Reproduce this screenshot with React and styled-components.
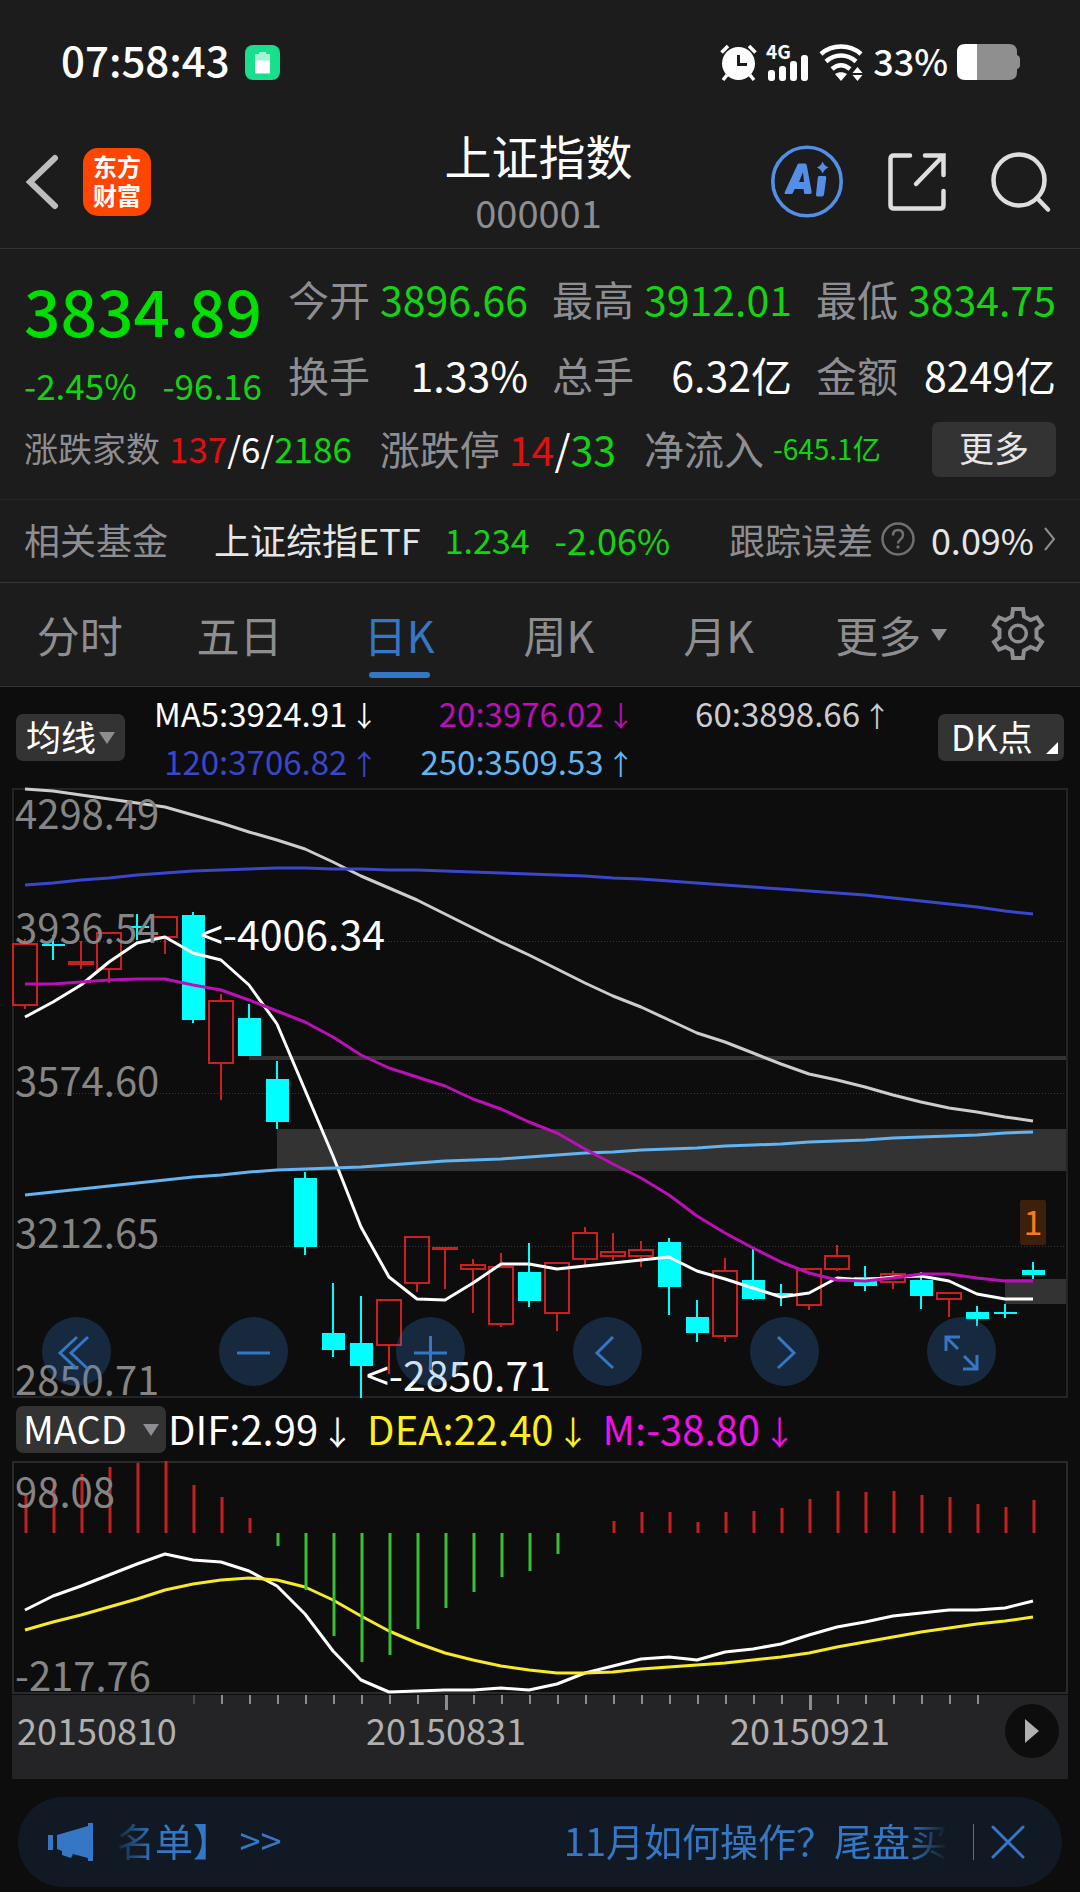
import React from "react";
import styled, { createGlobalStyle } from "styled-components";

const GlobalStyle = createGlobalStyle`
  * {
    box-sizing: border-box;
  }
  body {
    margin: 0;
    background: #0d0d0d;
    color: #fff;
    font-family: "Noto Sans CJK SC", sans-serif;
  }
  button {
    margin: 0;
    padding: 0;
    border: none;
    background: none;
    color: inherit;
    font: inherit;
    cursor: pointer;
  }
  a {
    color: inherit;
    text-decoration: none;
  }
  svg {
    display: block;
    overflow: visible;
  }
`;

const colors = {
  up: "#e01010",
  down: "#14d214",
  label: "#8e8e92",
  text: "#fff",
  soft: "#e6e6e6",
  blue: "#3577c4",
};

const Top = styled.div`
  background: #1c1c1c;
`;

const StatusBar = styled.div`
  display: flex;
  align-items: center;
  justify-content: space-between;
  height: 115px;
  padding: 9px 60px 0 61px;
`;

const StatusGroup = styled.div`
  display: flex;
  align-items: center;
  gap: ${(props) => props.$gap}px;
`;

const Clock = styled.span`
  font-size: 42px;
  font-weight: 500;
  line-height: 44px;
  padding-bottom: 6px;
`;

const Percent = styled.span`
  font-size: 36px;
  font-weight: 500;
  line-height: 40px;
  padding-bottom: 4px;
`;

const Header = styled.header`
  display: grid;
  grid-template-columns: 1fr auto 1fr;
  align-items: center;
  height: 134px;
  padding: 0 29px 0 26px;
  border-bottom: 1px solid #333;
`;

const HeaderSide = styled.div`
  display: flex;
  align-items: center;
  justify-content: ${(props) => (props.$end ? "flex-end" : "flex-start")};
  gap: ${(props) => (props.$end ? 45 : 23)}px;
`;

const Logo = styled.a`
  display: flex;
  flex-direction: column;
  align-items: center;
  justify-content: center;
  width: 68px;
  height: 68px;
  padding-bottom: 4px;
  border-radius: 15px;
  background: #ff4600;
  font-size: 24px;
  font-weight: 700;
  line-height: 29px;
`;

const Title = styled.h1`
  margin: 0;
  padding-top: 2px;
  font-size: 47px;
  font-weight: 400;
  line-height: 58px;
  text-align: center;
`;

const Code = styled.div`
  color: ${colors.label};
  font-size: 38px;
  line-height: 56px;
  text-align: center;
`;

const Quote = styled.section`
  padding: 11px 24px 13px;
  border-bottom: 1px solid #282828;
`;

const QuoteMain = styled.div`
  display: flex;
`;

const PriceBox = styled.div`
  width: 264px;
  color: ${colors.down};
`;

const Price = styled.div`
  color: #00e000;
  font-size: 64px;
  font-weight: 500;
  line-height: 98px;
`;

const Change = styled.div`
  display: flex;
  gap: 26px;
  font-size: 35px;
  line-height: 54px;
`;

const Stats = styled.div`
  flex: 1;
  display: grid;
  grid-template-columns: repeat(3, 1fr);
  column-gap: 24px;
  font-size: 41px;
  line-height: 76px;
`;

const Stat = styled.div`
  display: flex;
  justify-content: space-between;
  white-space: nowrap;
`;

const Tint = styled.span`
  color: ${(props) => colors[props.$tone]};
`;

const QuoteRow = styled.div`
  display: flex;
  align-items: center;
  gap: 28px;
  height: 74px;
  white-space: nowrap;
`;

const Pair = styled.div`
  display: flex;
  align-items: center;
  gap: 9px;
  padding-bottom: 3px;
  font-size: ${(props) => props.$size}px;
`;

const Count = styled.span`
  font-size: ${(props) => props.$size}px;
`;

const MoreButton = styled.button`
  width: 124px;
  height: 55px;
  margin-left: auto;
  padding-bottom: 4px;
  border-radius: 7px;
  background: #333;
  color: ${colors.soft};
  font-size: 35px;
  line-height: 50px;
`;

const FundRow = styled.a`
  display: flex;
  align-items: center;
  height: 83px;
  padding: 0 24px 4px;
  border-bottom: 1px solid #333;
  color: ${colors.soft};
  font-size: 36px;
  white-space: nowrap;
`;

const FundName = styled.span`
  margin: 0 24px 0 46px;
`;

const FundPrice = styled.span`
  margin-right: 25px;
  color: ${colors.down};
  font-size: 34px;
`;

const FundError = styled.span`
  display: flex;
  align-items: center;
  gap: 8px;
  margin-left: auto;
`;

const FundErrorValue = styled.span`
  margin: 0 2px 0 8px;
`;

const Tabs = styled.nav`
  display: grid;
  grid-template-columns: repeat(6, 4fr) 3fr;
  height: 104px;
  padding-right: 2px;
  border-bottom: 1px solid #333;
`;

const Tab = styled.button`
  position: relative;
  display: flex;
  align-items: center;
  justify-content: center;
  padding-bottom: 2px;
  color: ${(props) => (props.$active ? colors.blue : colors.label)};
  font-size: 43px;
  line-height: 60px;

  &::after {
    content: "";
    display: ${(props) => (props.$active ? "block" : "none")};
    position: absolute;
    bottom: 8px;
    width: 61px;
    height: 6px;
    border-radius: 3px;
    background: ${colors.blue};
  }
`;

const Caret = styled.span`
  width: 0;
  height: 0;
  margin-top: 4px;
  border-left: 8px solid transparent;
  border-right: 8px solid transparent;
  border-top: 12px solid ${colors.label};
`;

const TabCaret = styled(Caret)`
  margin: 2px -26px 0 10px;
`;

const Charts = styled.main`
  padding: 0 12px 5px;
`;

const Legend = styled.div`
  display: flex;
  align-items: center;
  height: 101px;
  padding: 0 4px;
`;

const Chip = styled.button`
  position: relative;
  display: flex;
  align-items: center;
  height: 47px;
  padding: 0 ${(props) => props.$pad}px 4px;
  gap: ${(props) => props.$gap || 0}px;
  border-radius: 7px;
  background: #333;
  font-size: ${(props) => props.$size || 35}px;
  line-height: 43px;
  white-space: nowrap;
`;

const DkChip = styled(Chip)`
  width: 126px;

  &::after {
    content: "";
    position: absolute;
    right: 6px;
    bottom: 7px;
    border-left: 12px solid transparent;
    border-bottom: 12px solid #fff;
  }
`;

const MaGrid = styled.div`
  flex: 1;
  display: grid;
  grid-template-columns: repeat(3, 1fr);
  margin-right: 44px;
  padding-bottom: 2px;
  font-size: 33px;
  line-height: 48px;
  text-align: right;
  white-space: nowrap;
`;

const MaItem = styled.span`
  color: ${(props) => props.$color};
`;

const Arrow = styled.span`
  padding: 0 3px;
  font-size: ${(props) => props.$size}px;
  line-height: 1;
`;

const Panel = styled.div`
  position: relative;
`;

const ChartSvg = styled.svg`
  width: 100%;
  height: auto;
  font-size: 40px;
`;

const AxisSvg = styled(ChartSvg)`
  margin-top: 1px;
  background: #242426;
  font-size: 36px;
`;

const Controls = styled.div`
  position: absolute;
  left: 30px;
  right: 72px;
  bottom: 12px;
  display: flex;
  justify-content: space-between;
`;

const RoundButton = styled.button`
  width: 69px;
  height: 69px;
  border-radius: 50%;
  background: rgba(57, 129, 217, 0.25);
`;

const MacdRow = styled.div`
  display: flex;
  align-items: center;
  height: 63px;
  padding: 0 4px;
`;

const MacdValues = styled.div`
  display: flex;
  gap: 10px;
  margin-left: 2px;
  padding-bottom: 3px;
  font-size: 40px;
  line-height: 50px;
  white-space: nowrap;
`;

const PlayButton = styled.button`
  position: absolute;
  right: 9px;
  top: 9px;
  display: flex;
  align-items: center;
  justify-content: center;
  width: 54px;
  height: 54px;
  border-radius: 50%;
  background: #0d0d0d;
`;

const Notice = styled.div`
  display: flex;
  align-items: center;
  height: 90px;
  margin: 18px 6px 0;
  padding: 0 37px 0 28px;
  border-radius: 45px;
  background: #111a24;
  color: ${colors.blue};
`;

const Ticker = styled.a`
  flex: 1;
  display: flex;
  justify-content: space-between;
  margin: 0 25px 0 16px;
  padding: 0 0 5px 7px;
  overflow: hidden;
  font-size: 38px;
  line-height: 56px;
  white-space: pre;
  mask-image: linear-gradient(
    to right,
    transparent,
    #000 44px,
    #000 calc(100% - 40px),
    transparent
  );
`;

const CloseButton = styled.button`
  display: flex;
  align-items: center;
  height: 36px;
  padding-left: 17px;
  border-left: 1px solid ${colors.blue};
`;

// one entry per trading day: [up, bodyTop, bodyBottom, high, low]
const candles = [
  [1, 156, 217, 151, 221],
  [0, 156, 158, 147, 172],
  [1, 174, 176, 153, 181],
  [1, 145, 181, 145, 195],
  [0, 138, 140, 126, 152],
  [1, 129, 149, 129, 166],
  [0, 127, 232, 124, 235],
  [1, 213, 275, 206, 312],
  [0, 230, 268, 216, 268],
  [0, 291, 334, 273, 341],
  [0, 390, 459, 384, 467],
  [0, 545, 562, 495, 569],
  [0, 555, 578, 508, 610],
  [1, 512, 557, 512, 586],
  [1, 449, 495, 449, 504],
  [1, 460, 461, 460, 501],
  [1, 477, 481, 471, 525],
  [1, 479, 536, 465, 539],
  [0, 484, 513, 455, 519],
  [1, 475, 525, 474, 543],
  [1, 445, 471, 439, 477],
  [1, 464, 468, 445, 472],
  [1, 462, 468, 453, 479],
  [0, 454, 499, 450, 527],
  [0, 529, 545, 512, 554],
  [1, 483, 548, 470, 554],
  [0, 492, 511, 461, 512],
  [0, 505, 507, 496, 518],
  [1, 481, 517, 481, 522],
  [1, 468, 481, 457, 483],
  [0, 489, 498, 478, 503],
  [1, 486, 494, 483, 501],
  [0, 492, 508, 484, 521],
  [1, 505, 511, 505, 529],
  [0, 524, 531, 518, 538],
  [0, 524, 526, 516, 530],
  [0, 482, 487, 474, 491],
];

const ma5 = [
  229, 214, 197, 174, 155, 149, 165, 172, 197, 236, 302, 368, 439, 489, 511,
  512, 495, 476, 476, 481, 478, 475, 472, 469, 483, 491, 500, 509, 505, 490,
  492, 489, 488, 493, 506, 511, 511,
];

const ma20 = [
  196, 196, 194, 192, 191, 191, 197, 202, 212, 223, 234, 249, 267, 280, 289,
  298, 311, 321, 334, 345, 361, 376, 390, 407, 428, 445, 460, 474, 485, 492,
  493, 490, 486, 486, 490, 493, 493,
];

const ma60 = [
  1, 3, 7, 11, 15, 19, 27, 35, 44, 52, 61, 74, 88, 100, 112, 126, 140, 154, 167,
  181, 195, 208, 219, 232, 245, 254, 265, 276, 286, 292, 299, 307, 314, 320,
  324, 329, 333,
];

const ma120 = [
  97, 95, 92, 90, 87, 85, 83, 82, 81, 80, 80, 81, 81, 82, 82, 83, 84, 85, 86,
  87, 88, 90, 91, 93, 95, 97, 99, 101, 103, 105, 107, 110, 113, 116, 119, 123,
  126,
];

const ma250 = [
  407, 404, 401, 398, 395, 392, 389, 387, 384, 382, 381, 380, 379, 377, 375,
  373, 372, 371, 369, 367, 365, 364, 362, 361, 360, 358, 357, 356, 354, 353,
  352, 350, 349, 348, 347, 345, 344,
];

const macdBars = [
  34, 18, 13, 6, 2, 0, 24, 36, 57, 85, 129, 175, 201, 194, 168, 147, 131, 116,
  110, 93, 72, 60, 51, 51, 61, 51, 50, 47, 38, 30, 31, 30, 34, 36, 43, 46, 39,
];

const dif = [
  149, 135, 125, 114, 103, 93, 99, 101, 110, 125, 153, 190, 219, 231, 230, 229,
  229, 227, 229, 223, 212, 205, 198, 196, 199, 191, 188, 183, 174, 166, 161,
  155, 152, 149, 149, 147, 140,
];

const dea = [
  169, 161, 154, 146, 138, 129, 123, 119, 117, 119, 126, 139, 155, 170, 182,
  192, 199, 205, 209, 212, 212, 211, 208, 206, 204, 202, 199, 196, 192, 186,
  181, 176, 171, 167, 163, 160, 156,
];

const STEP = 28;
const ZERO = 72;
const dayX = (i) => 13 + i * STEP;
const toPoints = (values) => values.map((y, i) => `${dayX(i)},${y}`).join(" ");

const stats = [
  { label: "今开", value: "3896.66", tone: "down" },
  { label: "最高", value: "3912.01", tone: "down" },
  { label: "最低", value: "3834.75", tone: "down" },
  { label: "换手", value: "1.33%", tone: "text" },
  { label: "总手", value: "6.32亿", tone: "text" },
  { label: "金额", value: "8249亿", tone: "text" },
];

const averages = [
  { text: "MA5:3924.91", arrow: "↓", color: "#fff" },
  { text: "20:3976.02", arrow: "↓", color: "#bb10b5" },
  { text: "60:3898.66", arrow: "↑", color: "#ccc" },
  { text: "120:3706.82", arrow: "↑", color: "#3a47cc" },
  { text: "250:3509.53", arrow: "↑", color: "#63b4f2" },
];

const macdValues = [
  { text: "DIF:2.99", arrow: "↓", color: "#fff" },
  { text: "DEA:22.40", arrow: "↓", color: "#fcee21" },
  { text: "M:-38.80", arrow: "↓", color: "#f010e8" },
];

const controls = [
  { name: "最早", d: "M35 20 18 36l17 16M46 20 29 36l17 16" },
  { name: "缩小", d: "M18 36h33" },
  { name: "放大", d: "M18 36h33M34.500 19v34" },
  { name: "左移", d: "M40 20 24 36l16 15" },
  { name: "右移", d: "M28 20 44 36 28 51" },
  {
    name: "全屏",
    d: "M19 34V20h14M19.500 20.500 31 32M50 38v14H36M49.500 51.500 37 39",
  },
];

function Line({ values, color, width = 3 }) {
  return (
    <polyline
      points={toPoints(values)}
      fill="none"
      stroke={color}
      strokeWidth={width}
      strokeLinejoin="round"
    />
  );
}

function Candle({ x, data }) {
  const [up, top, bottom, high, low] = data;
  if (up) {
    return (
      <g stroke="#cc2020" strokeWidth="2" fill="none">
        <rect x={x - 12} y={top} width="24" height={bottom - top} />
        <path d={`M${x} ${high}V${top}M${x} ${bottom}V${low}`} />
      </g>
    );
  }
  return (
    <g fill="#00ffff">
      <rect x={x - 11} y={top} width="23" height={bottom - top} />
      <rect x={x - 1} y={high} width="2" height={low - high} />
    </g>
  );
}

function Reading({ item, arrowSize }) {
  return (
    <MaItem $color={item.color}>
      {item.text}
      <Arrow $size={arrowSize}>{item.arrow}</Arrow>
    </MaItem>
  );
}

function StatusIcons() {
  return (
    <StatusGroup $gap={9}>
      <svg width="37" height="37" viewBox="0 0 37 37" fill="none">
        <circle cx="18.500" cy="19.500" r="16.500" fill="#fff" />
        <path
          d="M1.500 8.500 8 2M35.500 8.500 29 2M7 31l-4 5M30 31l4 5"
          stroke="#fff"
          strokeWidth="3.500"
        />
        <path d="M18.500 11v9.500H27" stroke="#1c1c1c" strokeWidth="3" />
      </svg>
      <svg width="44" height="37" viewBox="0 0 44 37" fill="#fff">
        <text x="0" y="15" fontSize="19" fontWeight="700">
          4G
        </text>
        <rect x="2" y="26" width="7" height="11" rx="3" />
        <rect x="13" y="22" width="7" height="15" rx="3" />
        <rect x="24" y="17" width="7" height="20" rx="3" />
        <rect x="35" y="11" width="7" height="26" rx="3" />
      </svg>
      <svg width="45" height="37" viewBox="0 0 45 37" fill="none">
        <path
          d="M2 10C13 0 31 0 42 10M7 17.500c9-8 21-8 30 0M13 25c6-5 12-5 18 0"
          stroke="#fff"
          strokeWidth="4.500"
        />
        <path
          d="M16 30c4-2.500 8-2.500 12 0l-6 7zM38.500 23l5 6h-10zM38.500 37l5-6h-10z"
          fill="#fff"
        />
      </svg>
      <Percent>33%</Percent>
      <svg width="63" height="36" viewBox="0 0 63 36">
        <path d="M20 0h32q8 0 8 8v3q3 1 3 4v6q0 3-3 4v3q0 8-8 8H20z" fill="#8f8f8f" />
        <path d="M8 0h12v36H8q-8 0-8-8V8q0-8 8-8z" fill="#fff" />
      </svg>
    </StatusGroup>
  );
}

function TopBar() {
  return (
    <>
      <StatusBar>
        <StatusGroup $gap={15}>
          <Clock>07:58:43</Clock>
          <svg width="35" height="35" viewBox="0 0 35 35">
            <rect width="35" height="35" rx="8" fill="#17df8b" />
            <path d="M10 9h4V7h7v2h4v7H10z" fill="#a6f3d3" />
            <rect x="10" y="15.500" width="15" height="13" rx="1" fill="#fff" />
          </svg>
        </StatusGroup>
        <StatusIcons />
      </StatusBar>
      <Header>
        <HeaderSide>
          <button aria-label="返回">
            <svg width="34" height="56" viewBox="0 0 34 56" fill="none">
              <path
                d="M29 4 4 28l25 24"
                stroke="#bdbdbd"
                strokeWidth="6"
                strokeLinecap="round"
              />
            </svg>
          </button>
          <Logo href="#home">
            <span>东方</span>
            <span>财富</span>
          </Logo>
        </HeaderSide>
        <div>
          <Title>上证指数</Title>
          <Code>000001</Code>
        </div>
        <HeaderSide $end>
          <button aria-label="AI">
            <svg width="72" height="73" viewBox="0 0 72 73" fill="none">
              <circle cx="36" cy="36.500" r="34.200" stroke="#548ee6" strokeWidth="3.600" />
              <path
                d="M26.500 19.500q.5-1 1.500-1h6q1.500 0 1.700 1.500l5 27q.3 2-1.700 2h-4.500q-1.500 0-1.500-1.500l-.4-3.500h-9l-1.600 3.700q-.5 1.300-2 1.300h-5q-2 0-1.200-2zM28 37h5l-1-10z"
                fill="#548ee6"
              />
              <path
                d="M48 31h6q1.500 0 1.300 1.500l-2.300 17q-.3 2-2 2h-4.500q-1.800 0-1.500-2l1.800-17q.2-1.500 1.200-1.500zM51.500 16.500q2 4.500 6 6-4 1.500-6 6-1.500-4.500-5.500-6 4-1.500 5.500-6z"
                fill="#548ee6"
              />
            </svg>
          </button>
          <button aria-label="分享">
            <svg width="58" height="58" viewBox="0 0 58 58" fill="none">
              <path
                d="M22 2.500H6Q2.500 2.500 2.500 6v46q0 3.500 3.500 3.500h46q3.500 0 3.500-3.500V38M37 2.500h18.500V22M55 3 28 31"
                stroke="#dedede"
                strokeWidth="4.500"
                strokeLinecap="round"
              />
            </svg>
          </button>
          <button aria-label="搜索">
            <svg width="60" height="60" viewBox="0 0 60 60" fill="none">
              <circle cx="28" cy="28" r="25.500" stroke="#dedede" strokeWidth="4.500" />
              <path
                d="m46 46 11 11.500"
                stroke="#dedede"
                strokeWidth="4.500"
                strokeLinecap="round"
              />
            </svg>
          </button>
        </HeaderSide>
      </Header>
    </>
  );
}

function QuotePanel() {
  return (
    <Quote>
      <QuoteMain>
        <PriceBox>
          <Price>3834.89</Price>
          <Change>
            <span>-2.45%</span>
            <span>-96.16</span>
          </Change>
        </PriceBox>
        <Stats>
          {stats.map((stat) => (
            <Stat key={stat.label}>
              <Tint $tone="label">{stat.label}</Tint>
              <Tint $tone={stat.tone}>{stat.value}</Tint>
            </Stat>
          ))}
        </Stats>
      </QuoteMain>
      <QuoteRow>
        <Pair $size={34}>
          <Tint $tone="label">涨跌家数</Tint>
          <Count $size={35}>
            <Tint $tone="up">137</Tint>/6/<Tint $tone="down">2186</Tint>
          </Count>
        </Pair>
        <Pair $size={40}>
          <Tint $tone="label">涨跌停</Tint>
          <Count $size={41}>
            <Tint $tone="up">14</Tint>/<Tint $tone="down">33</Tint>
          </Count>
        </Pair>
        <Pair $size={40}>
          <Tint $tone="label">净流入</Tint>
          <Count $size={28}>
            <Tint $tone="down">-645.1亿</Tint>
          </Count>
        </Pair>
        <MoreButton>更多</MoreButton>
      </QuoteRow>
    </Quote>
  );
}

function Fund() {
  return (
    <FundRow href="#fund">
      <Tint $tone="label">相关基金</Tint>
      <FundName>上证综指ETF</FundName>
      <FundPrice>1.234</FundPrice>
      <Tint $tone="down">-2.06%</Tint>
      <FundError>
        <Tint $tone="label">跟踪误差</Tint>
        <svg width="34" height="34" viewBox="0 0 34 34" fill="none">
          <circle cx="17" cy="17" r="15.500" stroke="#707070" strokeWidth="2.500" />
          <path
            d="M12 13.500q0-5.500 5-5.500t5 5q0 2.500-2.500 4.500T17 21.500"
            stroke="#707070"
            strokeWidth="2.500"
          />
          <circle cx="17" cy="25" r="1.700" fill="#707070" />
        </svg>
        <FundErrorValue>0.09%</FundErrorValue>
        <svg width="12" height="24" viewBox="0 0 12 24" fill="none">
          <path d="m1 1 9 11-9 11" stroke="#8e8e92" strokeWidth="2" />
        </svg>
      </FundError>
    </FundRow>
  );
}

function PeriodTabs() {
  return (
    <Tabs>
      {["分时", "五日", "日K", "周K", "月K"].map((name) => (
        <Tab key={name} $active={name === "日K"}>
          {name}
        </Tab>
      ))}
      <Tab>
        更多
        <TabCaret />
      </Tab>
      <Tab aria-label="设置">
        <svg width="52" height="53" viewBox="0 0 52 53" fill="none">
          <path
            d="M21 2h10l1 7.500 6.500 3.500 6.500-2.500 5 7.500-5.500 4.500v8l5.500 4.500-5 7.500-6.500-2.500L32 43.500 31 51H21l-1-7.500-6.500-3.500L7 42.500 2 35l5.500-4.500v-8L2 18l5-7.500 6.500 2.500L20 9.500z"
            stroke="#8e8e92"
            strokeWidth="4"
          />
          <circle cx="26" cy="26.500" r="8.300" stroke="#8e8e92" strokeWidth="3.500" />
        </svg>
      </Tab>
    </Tabs>
  );
}

function PriceChart() {
  return (
    <Panel>
      <ChartSvg viewBox="0 0 1056 610">
        <g fill="#333">
          <rect x="237" y="268" width="818" height="4" />
          <rect x="265" y="341" width="790" height="42" />
          <rect x="993" y="491" width="62" height="25" />
        </g>
        <path
          d="M1 153.500h1054M1 305.500h1054M1 458.500h1054"
          stroke="#3a3a3a"
          strokeDasharray="1 2"
        />
        <rect
          x="1"
          y="1"
          width="1054"
          height="608"
          fill="none"
          stroke="#242424"
          strokeWidth="2"
        />
        {candles.map((data, i) => (
          <Candle key={i} x={dayX(i)} data={data} />
        ))}
        <Line values={ma5} color="#fff" />
        <Line values={ma60} color="#ccc" />
        <Line values={ma120} color="#3a47cc" />
        <Line values={ma250} color="#63b4f2" />
        <Line values={ma20} color="#bb10b5" />
        <g fill="#858585">
          <text x="3" y="41">4298.49</text>
          <text x="3" y="155">3936.54</text>
          <text x="3" y="308">3574.60</text>
          <text x="3" y="460">3212.65</text>
          <text x="3" y="607">2850.71</text>
        </g>
        <g fill="#fff" fontSize="41">
          <text x="188" y="162">&lt;-4006.34</text>
          <text x="354" y="603">&lt;-2850.71</text>
        </g>
        <rect x="1008" y="412" width="26" height="45" rx="2" fill="#3d200c" />
        <text x="1021" y="447" fontSize="34" textAnchor="middle" fill="#fb7a1e">
          1
        </text>
      </ChartSvg>
      <Controls>
        {controls.map((item) => (
          <RoundButton key={item.name} aria-label={item.name}>
            <svg viewBox="0 0 69 71" fill="none" stroke={colors.blue} strokeWidth="3">
              <path d={item.d} />
            </svg>
          </RoundButton>
        ))}
      </Controls>
    </Panel>
  );
}

function MacdChart() {
  return (
    <ChartSvg viewBox="0 0 1056 233">
      <rect
        x="1"
        y="1"
        width="1054"
        height="231"
        fill="none"
        stroke="#2a2a2a"
        strokeWidth="2"
      />
      <Line values={dif} color="#fff" />
      <Line values={dea} color="#f7ea2a" />
      {macdBars.map((y, i) => (
        <path
          key={i}
          d={`M${dayX(i) + 1} ${ZERO}V${y}`}
          stroke={y < ZERO ? "#c42020" : "#38c038"}
          strokeWidth="3"
        />
      ))}
      <g fill="#858585">
        <text x="3" y="46">98.08</text>
        <text x="3" y="230">-217.76</text>
      </g>
    </ChartSvg>
  );
}

function DateAxis() {
  const ticks = [];
  for (let i = 6; i <= 34; i++) {
    const major = i === 15 || i === 28;
    ticks.push(
      <rect
        key={i}
        x={dayX(i)}
        y="0"
        width={major ? 3 : 2}
        height={major ? 15 : 9}
        fill={i === 6 ? "#4a4a4c" : "#8c8c8e"}
      />
    );
  }
  return (
    <Panel>
      <AxisSvg viewBox="0 0 1056 84">
        {ticks}
        <g fill="#b0b0b0">
          <text x="5" y="50">20150810</text>
          <text x={dayX(15) + 1} y="50" textAnchor="middle">20150831</text>
          <text x={dayX(28) + 1} y="50" textAnchor="middle">20150921</text>
        </g>
      </AxisSvg>
      <PlayButton aria-label="播放">
        <svg width="14" height="24" viewBox="0 0 14 24">
          <path d="M0 0 14 12 0 24z" fill="#b0b0b0" />
        </svg>
      </PlayButton>
    </Panel>
  );
}

function NoticeBar() {
  return (
    <Notice>
      <svg width="48" height="40" viewBox="0 0 48 40" fill={colors.blue}>
        <path d="M2 13h5v15H2zM11 13 42 4V1h5v38h-5v-3l-15-4-2 4-9-3v-4l-5-2z" />
      </svg>
      <Ticker href="#notice">
        <span>{"名单】 >>"}</span>
        <span>11月如何操作？尾盘买</span>
      </Ticker>
      <CloseButton aria-label="关闭">
        <svg width="34" height="34" viewBox="0 0 34 34" fill="none">
          <path
            d="m2 2 30 30M32 2 2 32"
            stroke={colors.blue}
            strokeWidth="3"
            strokeLinecap="round"
          />
        </svg>
      </CloseButton>
    </Notice>
  );
}

function App() {
  return (
    <>
      <GlobalStyle />
      <Top>
        <TopBar />
        <QuotePanel />
        <Fund />
        <PeriodTabs />
      </Top>
      <Charts>
        <Legend>
          <Chip $pad={10} $gap={3}>
            均线
            <Caret />
          </Chip>
          <MaGrid>
            {averages.map((item) => (
              <Reading key={item.text} item={item} arrowSize={28} />
            ))}
          </MaGrid>
          <DkChip $pad={13}>DK点</DkChip>
        </Legend>
        <PriceChart />
        <MacdRow>
          <Chip $pad={7} $gap={16} $size={38}>
            MACD
            <Caret />
          </Chip>
          <MacdValues>
            {macdValues.map((item) => (
              <Reading key={item.text} item={item} arrowSize={33} />
            ))}
          </MacdValues>
        </MacdRow>
        <MacdChart />
        <DateAxis />
        <NoticeBar />
      </Charts>
    </>
  );
}

export default App;
